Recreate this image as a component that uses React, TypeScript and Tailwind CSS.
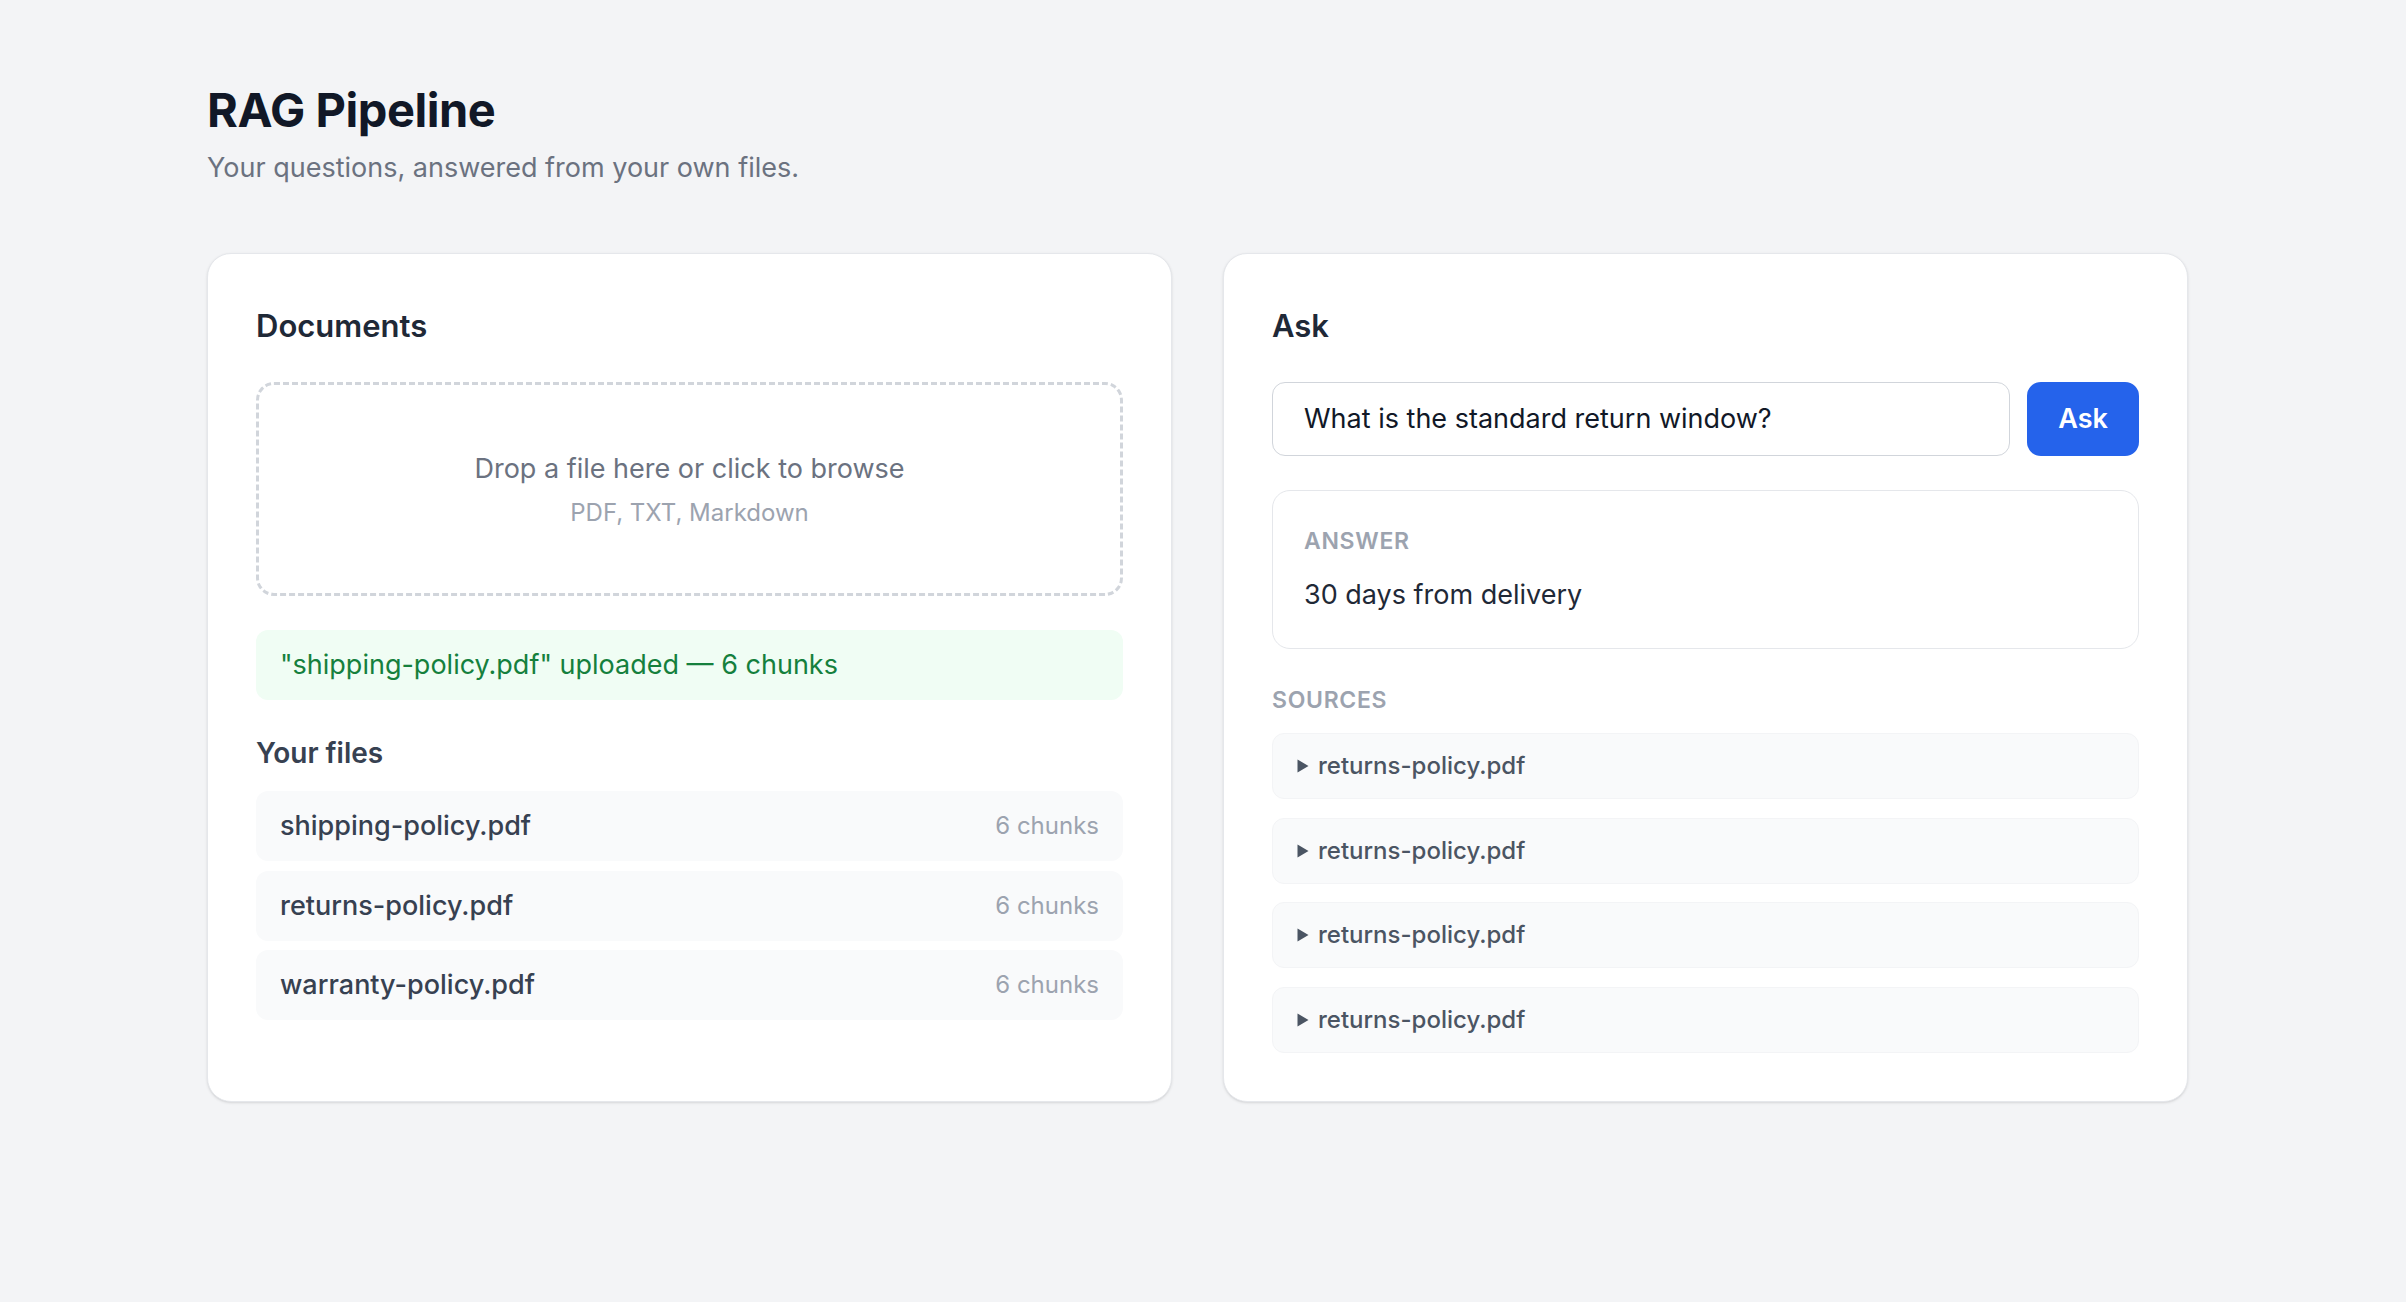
import { useState } from 'react';

const files = [
  { name: 'shipping-policy.pdf', chunks: 6 },
  { name: 'returns-policy.pdf', chunks: 6 },
  { name: 'warranty-policy.pdf', chunks: 6 },
];

const sources = ['returns-policy.pdf', 'returns-policy.pdf', 'returns-policy.pdf', 'returns-policy.pdf'];

export default function App() {
  const [question, setQuestion] = useState('What is the standard return window?');

  return (
    <div className="min-h-[1302px] bg-[#f3f4f6] font-['Inter','Noto_Sans',sans-serif] antialiased">
      <div className="ml-[207px] w-[1981px] pt-[83px] pb-[84px]">
        <h1 className="text-[47px] leading-[54px] font-bold tracking-[-0.01em] text-[#111827]">RAG Pipeline</h1>
        <p className="mt-[11px] text-[27px] leading-[40px] text-[#6b7280]">
          Your questions, answered from your own files.
        </p>

        <div className="mt-[65px] grid grid-cols-2 gap-[51px]">
          {/* Documents */}
          <section className="rounded-[24px] border-[1.5px] border-[#e5e7eb] bg-white p-[48px] shadow-sm">
            <h2 className="text-[31px] leading-[48px] font-semibold text-[#1f2937]">Documents</h2>

            <div className="mt-[32px] flex h-[214px] cursor-pointer flex-col items-center justify-center rounded-[18px] border-[3px] border-dashed border-[#d1d5db]">
              <p className="text-[27px] leading-[42px] text-[#6b7280]">Drop a file here or click to browse</p>
              <p className="mt-[5px] text-[24px] leading-[36px] text-[#9ca3af]">PDF, TXT, Markdown</p>
            </div>

            <div className="mt-[34px] rounded-[12px] bg-[#f0fdf4] px-[24px] py-[14px] text-[27px] leading-[42px] text-[#15803d]">
              "shipping-policy.pdf" uploaded — 6 chunks
            </div>

            <h3 className="mt-[32px] text-[28px] leading-[42px] font-semibold text-[#374151]">Your files</h3>
            <ul className="mt-[17px] flex flex-col gap-[9.5px]">
              {files.map((f) => (
                <li
                  key={f.name}
                  className="flex items-center justify-between rounded-[12px] bg-[#f9fafb] px-[24px] py-[14px]"
                >
                  <span className="text-[27px] leading-[42px] font-medium text-[#374151]">{f.name}</span>
                  <span className="text-[24px] leading-[36px] text-[#9ca3af]">{f.chunks} chunks</span>
                </li>
              ))}
            </ul>
          </section>

          {/* Ask */}
          <section className="rounded-[24px] border-[1.5px] border-[#e5e7eb] bg-white p-[48px] shadow-sm">
            <h2 className="text-[31px] leading-[48px] font-semibold text-[#1f2937]">Ask</h2>

            <div className="mt-[32px] flex gap-[17px]">
              <input
                value={question}
                onChange={(e) => setQuestion(e.target.value)}
                className="min-w-0 flex-1 rounded-[13px] border-[1.5px] border-[#d1d5db] px-[31px] py-[15px] text-[27px] leading-[42px] text-[#111827] outline-none"
              />
              <button className="rounded-[14px] bg-[#2563eb] px-[31px] text-[27px] font-semibold text-white">
                Ask
              </button>
            </div>

            <div className="mt-[34px] rounded-[18px] border-[1.5px] border-[#e5e7eb] px-[31px] pt-[34px] pb-[32px]">
              <div className="text-[23px] leading-[33px] font-semibold uppercase tracking-[0.03em] text-[#9ca3af]">
                Answer
              </div>
              <p className="mt-[16px] text-[27px] leading-[42px] text-[#1f2937]">30 days from delivery</p>
            </div>

            <div className="mt-[35px] text-[23px] leading-[33px] font-semibold uppercase tracking-[0.03em] text-[#9ca3af]">
              Sources
            </div>
            <div className="mt-[16px] flex flex-col gap-[18.5px]">
              {sources.map((s, i) => (
                <details
                  key={i}
                  className="rounded-[12px] border-[1.5px] border-[#f3f4f6] bg-[#f9fafb] px-[24px] py-[14px]"
                >
                  <summary className="flex cursor-pointer list-none items-center gap-[9px] text-[24px] leading-[36px] font-medium text-[#4b5563] [&::-webkit-details-marker]:hidden">
                    <svg width="12" height="14" viewBox="0 0 12 14" className="shrink-0">
                      <path d="M0.5 0.5 L11.5 7 L0.5 13.5 Z" fill="#4b5563" />
                    </svg>
                    {s}
                  </summary>
                </details>
              ))}
            </div>
          </section>
        </div>
      </div>
    </div>
  );
}
